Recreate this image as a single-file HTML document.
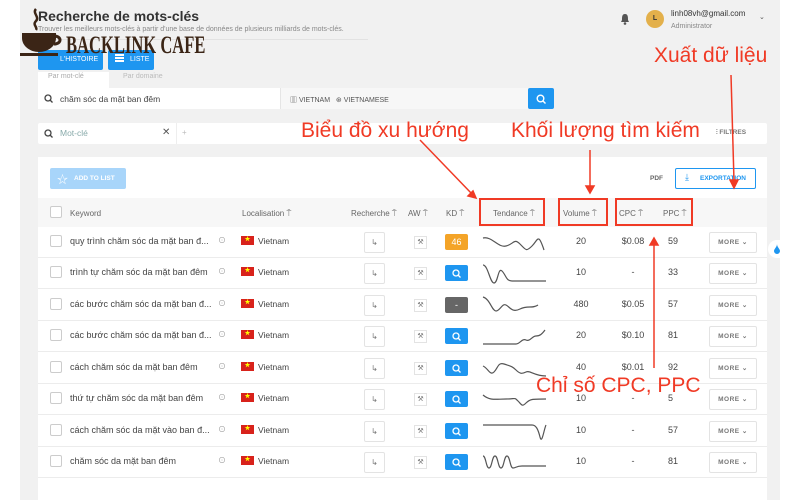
<!DOCTYPE html>
<html><head><meta charset="utf-8"><style>
*{box-sizing:border-box;margin:0;padding:0}
body{width:800px;height:500px;overflow:hidden;background:#fff;font-family:"Liberation Sans","Noto Sans CJK SC",sans-serif;position:relative;color:#444}
.a{position:absolute}
.bg{left:20px;top:0;width:760px;height:500px;background:#f1f1f1}
.card{left:38px;top:157px;width:729px;height:343px;background:#fff}
.row{position:absolute;left:38px;width:729px;height:31px;border-bottom:1px solid #ececec;font-size:9px;color:#444}
.row>*{position:absolute}
.cb{left:12px;top:8px;width:12px;height:12px;border:1px solid #ccc;border-radius:2px}
.kw{left:32px;top:9px}
.inf{left:180px;top:8px;font-size:8px;color:#999}
.flag{left:203px;top:9px;width:13px;height:9px;background:#d8221b;color:#ff0;font-size:6px;line-height:9px;text-align:center}
.vn{left:220px;top:9px;font-size:8.5px}
.rb{left:326px;top:5px;width:21px;height:21px;border:1px solid #e3e3e3;border-radius:2px;font-size:8px;color:#777;text-align:center;line-height:19px}
.aw{left:376px;top:9px;width:13px;height:13px;border:1px solid #e3e3e3;font-size:7px;color:#777;text-align:center;line-height:12px}
.kd{left:407px;top:7px;width:23px;height:16px;border-radius:2px;background:#1e96f0;color:#fff;font-size:9px;text-align:center;line-height:16px}
.kd svg{position:absolute;left:7px;top:4px}
.sp{left:444px;top:3px}
.vol{left:533px;top:9px;width:20px;text-align:center}
.cpc{left:583px;top:9px;width:24px;text-align:center}
.ppc{left:630px;top:9px}
.more{left:671px;top:5px;width:48px;height:21px;border:1px solid #e3e3e3;border-radius:2px;font-size:6.5px;font-weight:bold;color:#777;text-align:center;line-height:19px;letter-spacing:.5px}
.red{color:#f03a25;font-size:21px;position:absolute;white-space:nowrap}
.rbox{position:absolute;border:2px solid #f03a25}
.th{position:absolute;top:209px;font-size:8px;color:#666}
</style></head><body>
<div class="a bg"></div>
<div class="a" style="left:38px;top:8px;font-size:14px;font-weight:bold;color:#333">Recherche de mots-clés</div>
<div class="a" style="left:38px;top:26px;font-size:7px;color:#888">Trouver les meilleurs mots-clés à partir d'une base de données de plusieurs milliards de mots-clés.</div>
<div class="a" style="left:38px;top:39px;width:330px;height:1px;background:#e2e2e2"></div>
<div class="a" style="left:38px;top:50px;width:65px;height:20px;background:#1e96f0;border-radius:2px;color:#fff;font-size:7px;line-height:20px;padding-left:22px">L'HISTOIRE</div>
<div class="a" style="left:108px;top:50px;width:46px;height:20px;background:#1e96f0;border-radius:2px;color:#fff;font-size:7px;line-height:20px;padding-left:22px">LISTE</div>
<div class="a" style="left:115px;top:54px;width:9px;height:2px;background:#fff;box-shadow:0 3px 0 #fff,0 6px 0 #fff"></div>
<!-- logo -->
<svg class="a" style="left:20px;top:5px" width="44" height="52" viewBox="0 0 44 52"><path d="M16 4c-4 4 4 8 0 12s2 6 0 9" stroke="#3b2516" stroke-width="2.5" fill="none"/><path d="M2 28h34v5c0 8-8 14-17 14S2 41 2 33z" fill="#3b2516"/><path d="M34 31c8 0 8 8 0 8" stroke="#3b2516" stroke-width="3" fill="none"/><rect x="0" y="48" width="38" height="3" fill="#3b2516"/></svg>
<div class="a" style="left:66px;top:31px;font-family:'Liberation Serif',serif;font-weight:bold;font-size:23px;color:#3b2516;white-space:nowrap;transform:scale(0.72,1.1);transform-origin:top left">BACKLINK CAFE</div>
<div class="a" style="left:38px;top:72px;width:71px;height:17px;background:#fff"></div>
<div class="a" style="left:48px;top:73px;font-size:7px;color:#aaa">Par mot-clé</div>
<div class="a" style="left:123px;top:73px;font-size:7px;color:#bbb">Par domaine</div>
<div class="a" style="left:38px;top:88px;width:242px;height:21px;background:#fff"></div>
<div class="a" style="left:280px;top:88px;width:248px;height:21px;background:#f7f7f7;border-left:1px solid #e5e5e5"></div>
<svg class="a" style="left:44px;top:94px" width="9" height="9"><circle cx="4" cy="4" r="3" stroke="#444" stroke-width="1.3" fill="none"/><line x1="6" y1="6" x2="8.5" y2="8.5" stroke="#444" stroke-width="1.3"/></svg>
<div class="a" style="left:60px;top:94px;font-size:8.5px;color:#444">chăm sóc da mặt ban đêm</div>
<div class="a" style="left:290px;top:95px;font-size:7px;color:#555">▥ VIETNAM &nbsp; ⊛ VIETNAMESE</div>
<div class="a" style="left:528px;top:88px;width:26px;height:21px;background:#1e96f0;border-radius:2px"></div>
<svg class="a" style="left:536px;top:94px" width="10" height="10"><circle cx="4.5" cy="4.5" r="3.3" stroke="#fff" stroke-width="1.4" fill="none"/><line x1="7" y1="7" x2="9.5" y2="9.5" stroke="#fff" stroke-width="1.4"/></svg>
<div class="a" style="left:38px;top:123px;width:729px;height:21px;background:#fff;border-radius:2px"></div>
<div class="a" style="left:176px;top:123px;width:1px;height:21px;background:#eee"></div>
<svg class="a" style="left:44px;top:129px" width="9" height="9"><circle cx="4" cy="4" r="3" stroke="#444" stroke-width="1.3" fill="none"/><line x1="6" y1="6" x2="8.5" y2="8.5" stroke="#444" stroke-width="1.3"/></svg>
<div class="a" style="left:60px;top:128px;font-size:8.5px;color:#8aa">Mot-clé</div>
<div class="a" style="left:162px;top:127px;font-size:10px;color:#555">✕</div>
<div class="a" style="left:182px;top:128px;font-size:8px;color:#bbb">+</div>
<div class="a" style="left:716px;top:129px;font-size:6.5px;color:#777;font-weight:bold">⫶ FILTRES</div>
<!-- user -->
<svg class="a" style="left:620px;top:13px" width="10" height="12"><path d="M5 1C2 1 2 4 2 7L1 9h8L8 7C8 4 8 1 5 1z" fill="#555"/><circle cx="5" cy="10.5" r="1.3" fill="#555"/></svg>
<div class="a" style="left:646px;top:10px;width:18px;height:18px;border-radius:50%;background:#e3b04b;font-size:7px;font-weight:bold;color:#333;text-align:center;line-height:18px">L</div>
<div class="a" style="left:671px;top:9px;font-size:8px;color:#333">linh08vh@gmail.com</div>
<div class="a" style="left:671px;top:23px;font-size:7px;color:#888">Administrator</div>
<div class="a" style="left:759px;top:13px;font-size:7px;color:#555">⌄</div>
<div class="a card"></div>
<div class="a" style="left:50px;top:168px;width:76px;height:21px;background:#a8d5fa;border-radius:2px;color:#fff;font-size:6.5px;font-weight:bold;line-height:21px;padding-left:24px">ADD TO LIST</div>
<div class="a" style="left:57px;top:171px;color:#fff;font-size:11px">☆</div>
<div class="a" style="left:650px;top:175px;font-size:6.5px;color:#666;font-weight:bold">PDF</div>
<div class="a" style="left:675px;top:168px;width:81px;height:21px;border:1px solid #1e96f0;border-radius:2px;color:#1e96f0;font-size:6.5px;font-weight:bold;line-height:19px;padding-left:24px">EXPORTATION</div>
<div class="a" style="left:685px;top:172px;color:#1e96f0;font-size:9px">⤓</div>
<div class="a" style="left:38px;top:198px;width:729px;height:29px;background:#f7f7f7"></div>
<div class="a" style="left:50px;top:206px;width:12px;height:12px;border:1px solid #ccc;border-radius:2px;background:#fff"></div>
<div class="th" style="left:70px">Keyword</div>
<div class="th" style="left:242px">Localisation ⍑</div>
<div class="th" style="left:351px">Recherche ⍑</div>
<div class="th" style="left:408px">AW ⍑</div>
<div class="th" style="left:446px">KD ⍑</div>
<div class="th" style="left:493px">Tendance ⍑</div>
<div class="th" style="left:563px">Volume ⍑</div>
<div class="th" style="left:619px">CPC ⍑</div>
<div class="th" style="left:663px">PPC ⍑</div>

<div class="row" style="top:227px"><div class="cb"></div><div class="kw">quy trình chăm sóc da mặt ban đ...</div><div class="inf">⊙</div><div class="flag">★</div><div class="vn">Vietnam</div><div class="rb">↳</div><div class="aw">⚒</div><div class="kd" style="background:#f4a428">46</div><svg class="sp" width="66" height="26"><path d="M1 8C10 6 16 18 24 16S32 8 38 14 44 22 50 16 56 2 62 20" stroke="#555" stroke-width="1.2" fill="none"/></svg><div class="vol">20</div><div class="cpc">$0.08</div><div class="ppc">59</div><div class="more">MORE ⌄</div></div>
<div class="row" style="top:258px"><div class="cb"></div><div class="kw">trình tự chăm sóc da mặt ban đêm</div><div class="inf">⊙</div><div class="flag">★</div><div class="vn">Vietnam</div><div class="rb">↳</div><div class="aw">⚒</div><div class="kd"><svg width="9" height="9"><circle cx="4" cy="4" r="3" stroke="#fff" stroke-width="1.3" fill="none"/><line x1="6" y1="6" x2="8.5" y2="8.5" stroke="#fff" stroke-width="1.3"/></svg></div><svg class="sp" width="66" height="26"><path d="M1 4C6 4 8 22 12 22S16 6 20 10 24 20 30 20H64" stroke="#555" stroke-width="1.2" fill="none"/></svg><div class="vol">10</div><div class="cpc">-</div><div class="ppc">33</div><div class="more">MORE ⌄</div></div>
<div class="row" style="top:290px"><div class="cb"></div><div class="kw">các bước chăm sóc da mặt ban đ...</div><div class="inf">⊙</div><div class="flag">★</div><div class="vn">Vietnam</div><div class="rb">↳</div><div class="aw">⚒</div><div class="kd" style="background:#666">-</div><svg class="sp" width="66" height="26"><path d="M1 4C8 6 10 18 14 18S20 10 24 12 30 20 38 16 50 16 56 12 62 12" stroke="#555" stroke-width="1.2" fill="none"/></svg><div class="vol">480</div><div class="cpc">$0.05</div><div class="ppc">57</div><div class="more">MORE ⌄</div></div>
<div class="row" style="top:321px"><div class="cb"></div><div class="kw">các bước chăm sóc da mặt ban đ...</div><div class="inf">⊙</div><div class="flag">★</div><div class="vn">Vietnam</div><div class="rb">↳</div><div class="aw">⚒</div><div class="kd"><svg width="9" height="9"><circle cx="4" cy="4" r="3" stroke="#fff" stroke-width="1.3" fill="none"/><line x1="6" y1="6" x2="8.5" y2="8.5" stroke="#fff" stroke-width="1.3"/></svg></div><svg class="sp" width="66" height="26"><path d="M1 20H34C38 20 40 14 44 16S50 12 54 12 60 10 63 6" stroke="#555" stroke-width="1.2" fill="none"/></svg><div class="vol">20</div><div class="cpc">$0.10</div><div class="ppc">81</div><div class="more">MORE ⌄</div></div>
<div class="row" style="top:353px"><div class="cb"></div><div class="kw">cách chăm sóc da mặt ban đêm</div><div class="inf">⊙</div><div class="flag">★</div><div class="vn">Vietnam</div><div class="rb">↳</div><div class="aw">⚒</div><div class="kd"><svg width="9" height="9"><circle cx="4" cy="4" r="3" stroke="#fff" stroke-width="1.3" fill="none"/><line x1="6" y1="6" x2="8.5" y2="8.5" stroke="#fff" stroke-width="1.3"/></svg></div><svg class="sp" width="66" height="26"><path d="M1 10C6 12 8 20 12 16S16 6 22 8 30 10 34 14 40 18 44 16 52 20 64 20" stroke="#555" stroke-width="1.2" fill="none"/></svg><div class="vol">40</div><div class="cpc">$0.01</div><div class="ppc">92</div><div class="more">MORE ⌄</div></div>
<div class="row" style="top:384px"><div class="cb"></div><div class="kw">thứ tự chăm sóc da mặt ban đêm</div><div class="inf">⊙</div><div class="flag">★</div><div class="vn">Vietnam</div><div class="rb">↳</div><div class="aw">⚒</div><div class="kd"><svg width="9" height="9"><circle cx="4" cy="4" r="3" stroke="#fff" stroke-width="1.3" fill="none"/><line x1="6" y1="6" x2="8.5" y2="8.5" stroke="#fff" stroke-width="1.3"/></svg></div><svg class="sp" width="66" height="26"><path d="M1 8C8 14 14 12 24 12S32 10 36 14 40 20 44 16 50 12 64 12" stroke="#555" stroke-width="1.2" fill="none"/></svg><div class="vol">10</div><div class="cpc">-</div><div class="ppc">5</div><div class="more">MORE ⌄</div></div>
<div class="row" style="top:416px"><div class="cb"></div><div class="kw">cách chăm sóc da mặt vào ban đ...</div><div class="inf">⊙</div><div class="flag">★</div><div class="vn">Vietnam</div><div class="rb">↳</div><div class="aw">⚒</div><div class="kd"><svg width="9" height="9"><circle cx="4" cy="4" r="3" stroke="#fff" stroke-width="1.3" fill="none"/><line x1="6" y1="6" x2="8.5" y2="8.5" stroke="#fff" stroke-width="1.3"/></svg></div><svg class="sp" width="66" height="26"><path d="M1 6H50C54 6 56 10 58 18S62 10 64 6" stroke="#555" stroke-width="1.2" fill="none"/></svg><div class="vol">10</div><div class="cpc">-</div><div class="ppc">57</div><div class="more">MORE ⌄</div></div>
<div class="row" style="top:447px"><div class="cb"></div><div class="kw">chăm sóc da mặt ban đêm</div><div class="inf">⊙</div><div class="flag">★</div><div class="vn">Vietnam</div><div class="rb">↳</div><div class="aw">⚒</div><div class="kd"><svg width="9" height="9"><circle cx="4" cy="4" r="3" stroke="#fff" stroke-width="1.3" fill="none"/><line x1="6" y1="6" x2="8.5" y2="8.5" stroke="#fff" stroke-width="1.3"/></svg></div><svg class="sp" width="66" height="26"><path d="M1 6C4 6 4 18 7 18S10 6 13 6 16 18 19 18 22 6 25 6 28 18 31 18 34 16 40 16H64" stroke="#555" stroke-width="1.2" fill="none"/></svg><div class="vol">10</div><div class="cpc">-</div><div class="ppc">81</div><div class="more">MORE ⌄</div></div>

<div class="a" style="left:768px;top:240px;width:16px;height:18px;border-radius:9px 0 0 9px;background:#fff"></div>
<svg class="a" style="left:773px;top:244px" width="8" height="10"><path d="M4 0C4 3 1 5 1 7a3 3 0 0 0 6 0C7 5 4 3 4 0z" fill="#1e96f0"/></svg>
<!-- annotations -->
<div class="red" style="left:301px;top:119px">Biểu đồ xu hướng</div>
<div class="red" style="left:511px;top:119px">Khối lượng tìm kiếm</div>
<div class="red" style="left:654px;top:44px">Xuất dữ liệu</div>
<div class="red" style="left:536px;top:374px">Chỉ số CPC, PPC</div>
<div class="rbox" style="left:479px;top:198px;width:66px;height:28px"></div>
<div class="rbox" style="left:558px;top:198px;width:50px;height:28px"></div>
<div class="rbox" style="left:615px;top:198px;width:78px;height:28px"></div>
<svg class="a" style="left:0;top:0" width="800" height="500"><g stroke="#f03a25" stroke-width="1.5" fill="#f03a25">
<line x1="420" y1="140" x2="472" y2="194"/><path d="M476 198l-8-2 5-5z"/>
<line x1="590" y1="150" x2="590" y2="186"/><path d="M586 186h8l-4 7z"/>
<line x1="731" y1="75" x2="734" y2="181"/><path d="M730 180h8l-4 8z"/>
<line x1="654" y1="368" x2="654" y2="244"/><path d="M650 245h8l-4-7z"/>
</g></svg>
</body></html>
